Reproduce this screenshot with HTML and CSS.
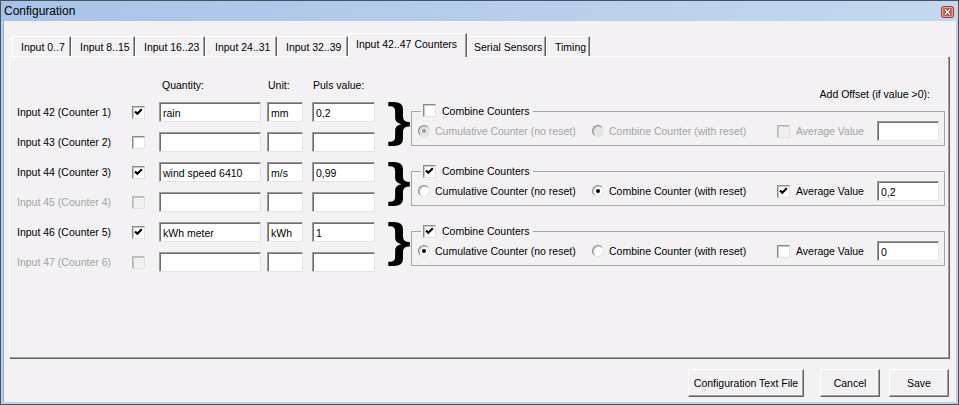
FILE: index.html
```html
<!DOCTYPE html>
<html>
<head>
<meta charset="utf-8">
<title>Configuration</title>
<link rel="stylesheet" href="styles.css">
</head>
<body>
<div class="window">
  <div class="titlebar">
    <span class="title">Configuration</span>
    <span class="close">
      <svg width="13" height="12" viewBox="0 0 13 12">
        <rect x="0.5" y="0.5" width="12" height="11" rx="2" fill="#d26a5f" stroke="#9a3a31"/>
        <rect x="1.5" y="1.5" width="10" height="9" rx="1" fill="none" stroke="#e7a49b"/>
        <path d="M4 3.2 L9 8.8 M9 3.2 L4 8.8" stroke="#5a2520" stroke-width="2.6"/>
        <path d="M4 3.2 L9 8.8 M9 3.2 L4 8.8" stroke="#fff" stroke-width="1.5"/>
      </svg>
    </span>
  </div>
  <div class="client">
    <div class="tabs">
      <div class="tab t1">Input 0..7</div>
      <div class="tab t2">Input 8..15</div>
      <div class="tab t3">Input 16..23</div>
      <div class="tab t4">Input 24..31</div>
      <div class="tab t5">Input 32..39</div>
      <div class="tab t6 active">Input 42..47 Counters</div>
      <div class="tab t7">Serial Sensors</div>
      <div class="tab t8">Timing</div>
    </div>
    <div class="panel">
      <div class="grid">
        <div class="hcell"></div>
        <div class="hcell"></div>
        <div class="hcell hq">Quantity:</div>
        <div class="hcell hu">Unit:</div>
        <div class="hcell hp">Puls value:</div>
        <div class="hcell"></div>
        <div class="hcell offset">Add Offset (if value &gt;0):</div>

        <!-- row 1 -->
        <div class="lbl">Input 42 (Counter 1)</div>
        <div class="cbcell"><span class="cb"><svg class="tick" viewBox="0 0 11 11"><path d="M2 4.5 L4.3 6.8 L8.8 2.3"/></svg></span></div>
        <div class="fcell"><div class="tb q">rain</div></div>
        <div class="fcell"><div class="tb u">mm</div></div>
        <div class="fcell"><div class="tb p">0,2</div></div>
        <div class="brace">}</div>
        <fieldset class="group dis">
          <legend><span class="cb"></span><span class="ltext">Combine Counters</span></legend>
          <div class="gbody">
            <div class="opt"><span class="rb dis"><span class="dot"></span></span><span class="otext">Cumulative Counter (no reset)</span></div>
            <div class="opt"><span class="rb dis"></span><span class="otext">Combine Counter (with reset)</span></div>
            <div class="opt"><span class="cb dis"></span><span class="otext">Average Value</span></div>
            <div class="tb o"></div>
          </div>
        </fieldset>

        <!-- row 2 -->
        <div class="lbl">Input 43 (Counter 2)</div>
        <div class="cbcell"><span class="cb"></span></div>
        <div class="fcell"><div class="tb q"></div></div>
        <div class="fcell"><div class="tb u"></div></div>
        <div class="fcell"><div class="tb p"></div></div>

        <!-- row 3 -->
        <div class="lbl">Input 44 (Counter 3)</div>
        <div class="cbcell"><span class="cb"><svg class="tick" viewBox="0 0 11 11"><path d="M2 4.5 L4.3 6.8 L8.8 2.3"/></svg></span></div>
        <div class="fcell"><div class="tb q">wind speed 6410</div></div>
        <div class="fcell"><div class="tb u">m/s</div></div>
        <div class="fcell"><div class="tb p">0,99</div></div>
        <div class="brace">}</div>
        <fieldset class="group">
          <legend><span class="cb"><svg class="tick" viewBox="0 0 11 11"><path d="M2 4.5 L4.3 6.8 L8.8 2.3"/></svg></span><span class="ltext">Combine Counters</span></legend>
          <div class="gbody">
            <div class="opt"><span class="rb"></span><span class="otext">Cumulative Counter (no reset)</span></div>
            <div class="opt"><span class="rb"><span class="dot"></span></span><span class="otext">Combine Counter (with reset)</span></div>
            <div class="opt"><span class="cb"><svg class="tick" viewBox="0 0 11 11"><path d="M2 4.5 L4.3 6.8 L8.8 2.3"/></svg></span><span class="otext">Average Value</span></div>
            <div class="tb o">0,2</div>
          </div>
        </fieldset>

        <!-- row 4 -->
        <div class="lbl dis">Input 45 (Counter 4)</div>
        <div class="cbcell"><span class="cb dis"></span></div>
        <div class="fcell"><div class="tb q"></div></div>
        <div class="fcell"><div class="tb u"></div></div>
        <div class="fcell"><div class="tb p"></div></div>

        <!-- row 5 -->
        <div class="lbl">Input 46 (Counter 5)</div>
        <div class="cbcell"><span class="cb"><svg class="tick" viewBox="0 0 11 11"><path d="M2 4.5 L4.3 6.8 L8.8 2.3"/></svg></span></div>
        <div class="fcell"><div class="tb q">kWh meter</div></div>
        <div class="fcell"><div class="tb u">kWh</div></div>
        <div class="fcell"><div class="tb p">1</div></div>
        <div class="brace">}</div>
        <fieldset class="group">
          <legend><span class="cb"><svg class="tick" viewBox="0 0 11 11"><path d="M2 4.5 L4.3 6.8 L8.8 2.3"/></svg></span><span class="ltext">Combine Counters</span></legend>
          <div class="gbody">
            <div class="opt"><span class="rb"><span class="dot"></span></span><span class="otext">Cumulative Counter (no reset)</span></div>
            <div class="opt"><span class="rb"></span><span class="otext">Combine Counter (with reset)</span></div>
            <div class="opt"><span class="cb"></span><span class="otext">Average Value</span></div>
            <div class="tb o">0</div>
          </div>
        </fieldset>

        <!-- row 6 -->
        <div class="lbl dis">Input 47 (Counter 6)</div>
        <div class="cbcell"><span class="cb dis"></span></div>
        <div class="fcell"><div class="tb q"></div></div>
        <div class="fcell"><div class="tb u"></div></div>
        <div class="fcell"><div class="tb p"></div></div>
      </div>
    </div>
    <div class="buttons">
      <div class="btn wide">Configuration Text File</div>
      <div class="btn cancel">Cancel</div>
      <div class="btn">Save</div>
    </div>
  </div>
</div>
</body>
</html>
```

FILE: styles.css
```css
* { box-sizing: border-box; }

body {
  margin: 0;
  font-family: "Liberation Sans", Arial, sans-serif;
  font-size: 10.5px;
  line-height: 14px;
  color: #000;
  background: #f4f1f5;
}

.window {
  width: 959px;
  height: 405px;
  border: 1px solid #45525f;
  background: #b8d0ec;
  display: flex;
  flex-direction: column;
}

.titlebar {
  height: 20px;
  flex: none;
  display: flex;
  align-items: center;
  justify-content: space-between;
  padding: 0 4px 0 3px;
  background: linear-gradient(to right, #a7c3e7, #c3d8f0);
}

.title {
  font-size: 12px;
  color: #000;
}

.close {
  display: flex;
  margin-top: 1px;
}

.client {
  flex: 1;
  margin: 0 2px 2px 2px;
  background: #f4f1f5;
  border-left: 1px solid #8fb0d8;
  display: flex;
  flex-direction: column;
  padding: 12px 7px 0 5px;
}

/* tabs */
.tabs {
  height: 23px;
  display: flex;
  align-items: flex-end;
  padding-left: 3px;
}

.tab {
  height: 20px;
  padding: 3px 0 0 8px;
  border-top: 1px solid #fff;
  border-left: 1px solid #fff;
  border-right: 1px solid #5f5f5f;
  box-shadow: inset -1px 0 0 #a0a0a0;
  white-space: nowrap;
  background: #f4f1f5;
  flex: none;
}

.t1 { width: 59px; }
.t2 { width: 64px; }
.t3 { width: 70px; }
.t4 { width: 72px; padding-left: 9px; }
.t5 { width: 71px; }
.t6 { width: 119px; }
.t7 { width: 79px; padding-left: 6px; }
.t8 { width: 44px; }

.tab.active {
  height: 24px;
  margin-bottom: -1px;
  padding-left: 7px;
  position: relative;
  z-index: 2;
}

/* panel */
.panel {
  width: 940px;
  height: 302px;
  border-top: 1px solid #fff;
  border-left: 1px solid #fff;
  border-right: 1px solid #a0a0a0;
  border-bottom: 1px solid #a0a0a0;
  box-shadow: 1px 1px 0 #646464;
  padding: 21px 0 0 7px;
}

.grid {
  display: grid;
  grid-template-columns: 115px 27px 108px 45px 75px 24px 535px;
  grid-template-rows: 19px repeat(6, 30px);
}

.hcell {
  white-space: nowrap;
}

.hq { padding-left: 3px; }
.hu { padding-left: 1px; }
.hp { padding-left: 1px; }

.offset {
  align-self: end;
  margin-bottom: -4px;
  text-align: right;
  padding-right: 16px;
}

.lbl {
  display: flex;
  align-items: center;
  white-space: nowrap;
}

.dis { color: #a3a3a3; }

.cbcell {
  display: flex;
  align-items: center;
}

.fcell {
  display: flex;
  align-items: center;
}

/* text boxes */
.tb {
  height: 20px;
  background: #fff;
  border-top: 1px solid #9a9a9a;
  border-left: 1px solid #9a9a9a;
  border-right: 1px solid #e4e4e4;
  border-bottom: 1px solid #e4e4e4;
  box-shadow: inset 1px 1px 0 #6e6e6e;
  padding: 3px 0 0 3px;
  white-space: nowrap;
  overflow: hidden;
  color: #000;
}

.tb.q { width: 102px; }
.tb.u { width: 36px; }
.tb.p { width: 63px; }
.tb.o { width: 62px; }

/* checkbox */
.cb {
  display: inline-flex;
  align-items: center;
  justify-content: center;
  width: 13px;
  height: 13px;
  background: #fff;
  border-top: 1px solid #8a8a8a;
  border-left: 1px solid #8a8a8a;
  border-right: 1px solid #e2e2e2;
  border-bottom: 1px solid #e2e2e2;
  box-shadow: inset 1px 1px 0 #c8c8c8;
  flex: none;
}

.cb.dis {
  background: #f1eff2;
  border-top-color: #b8b8b8;
  border-left-color: #b8b8b8;
}

.tick {
  width: 11px;
  height: 11px;
}

.tick path {
  fill: none;
  stroke: #000;
  stroke-width: 2.2;
}

/* radio */
.rb {
  display: inline-flex;
  align-items: center;
  justify-content: center;
  width: 12px;
  height: 12px;
  border-radius: 50%;
  background: #fff;
  border: 1px solid;
  border-color: #8a8a8a #e2e2e2 #e2e2e2 #8a8a8a;
  box-shadow: inset 1px 1px 0 #c8c8c8;
  flex: none;
}

.rb.dis {
  background: #e6e4e7;
}

.dot {
  width: 4px;
  height: 4px;
  border-radius: 50%;
  background: #000;
}

.rb.dis .dot { background: #9a9a9a; }

/* brace */
.brace {
  grid-row: span 2;
  font-family: "Liberation Sans", Arial, sans-serif;
  font-weight: bold;
  font-size: 47px;
  line-height: 47px;
  height: 47px;
  margin-top: -1px;
  padding-left: 0;
  color: #000;
  transform: scaleX(1.3);
  transform-origin: left center;
}

/* group boxes */
.group {
  grid-row: span 2;
  align-self: start;
  margin: 7px 0 0 0;
  padding: 0 0 0 6px;
  min-width: 0;
  border: 1px solid #a6a6a6;
  width: 534px;
}

.group legend {
  margin-left: 3px;
  padding: 0 3px 0 2px;
  line-height: 14px;
  height: 14px;
  white-space: nowrap;
}

.group legend .cb {
  vertical-align: -2px;
}

.ltext {
  margin-left: 6px;
}

.gbody {
  height: 27px;
  display: grid;
  grid-template-columns: 174px 185px 100px 62px;
  align-items: center;
  padding-bottom: 1px;
}

.opt {
  display: flex;
  align-items: center;
  white-space: nowrap;
}

.otext { margin-left: 5px; }
.opt .cb + .otext { margin-left: 6px; }

.group.dis .otext { color: #a3a3a3; }
.group.dis legend { color: #000; }

/* buttons */
.buttons {
  margin-top: 11px;
  display: flex;
  justify-content: flex-end;
  gap: 9px;
}

.btn {
  height: 28px;
  width: 60px;
  display: flex;
  align-items: center;
  justify-content: center;
  background: #f4f1f5;
  border: 1px solid;
  border-color: #fff #646464 #646464 #fff;
  box-shadow: inset -1px -1px 0 #a0a0a0;
  white-space: nowrap;
}

.btn.wide {
  width: 116px;
}

.btn.cancel {
  margin-left: 7px;
}
```
